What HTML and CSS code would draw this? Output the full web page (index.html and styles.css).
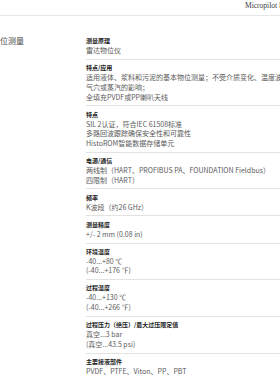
FILE: index.html
```html
<!DOCTYPE html>
<html lang="zh-CN">
<head>
<meta charset="utf-8">
<title>Micropilot FMR50</title>
<link rel="stylesheet" href="styles.css">
</head>
<body>
<div class="page">
  <header class="topbar">
    <span class="crumb">Micropilot FMR50</span>
  </header>
  <main class="main">
    <aside class="side">
      <h2 class="heading">物位测量</h2>
    </aside>
    <section class="list">
      <div class="spec">
        <div class="label">测量原理</div>
        <div class="v">雷达物位仪</div>
      </div>
      <div class="spec">
        <div class="label">特点/应用</div>
        <div class="v">适用液体、浆料和污泥的基本物位测量；不受介质变化、温度波动、<br>气穴或蒸汽的影响；</div>
        <div class="v">全填充PVDF或PP喇叭天线</div>
      </div>
      <div class="spec">
        <div class="label">特点</div>
        <div class="v">SIL 2认证，符合IEC 61508标准</div>
        <div class="v">多路回波跟踪确保安全性和可靠性</div>
        <div class="v">HistoROM智能数据存储单元</div>
      </div>
      <div class="spec">
        <div class="label">电源/通信</div>
        <div class="v">两线制（HART、PROFIBUS PA、FOUNDATION Fieldbus）</div>
        <div class="v">四限制（HART）</div>
      </div>
      <div class="spec">
        <div class="label">频率</div>
        <div class="v">K波段（约26 GHz）</div>
      </div>
      <div class="spec">
        <div class="label">测量精度</div>
        <div class="v">+/- 2 mm (0.08 in)</div>
      </div>
      <div class="spec">
        <div class="label">环境温度</div>
        <div class="v">-40...+80 ℃</div>
        <div class="v">(-40...+176 ℉)</div>
      </div>
      <div class="spec">
        <div class="label">过程温度</div>
        <div class="v">-40...+130 ℃</div>
        <div class="v">(-40...+266 ℉)</div>
      </div>
      <div class="spec">
        <div class="label">过程压力（绝压）/最大过压限定值</div>
        <div class="v">真空...3 bar</div>
        <div class="v">(真空...43.5 psi)</div>
      </div>
      <div class="spec">
        <div class="label">主要接液部件</div>
        <div class="v">PVDF、PTFE、Viton、PP、PBT</div>
      </div>
    </section>
  </main>
</div>
</body>
</html>
```
FILE: styles.css
```css
html, body {
  margin: 0;
  padding: 0;
  background: #ffffff;
}
body {
  width: 280px;
  height: 380px;
  overflow: hidden;
  font-family: "Noto Sans CJK SC", "Noto Sans", sans-serif;
  color: #555555;
}
.page {
  width: 440px;
}
.topbar {
  box-sizing: border-box;
  height: 16px;
  border-bottom: 1px solid #e6e6e6;
  padding-left: 245px;
}
.crumb {
  display: block;
  font-family: "Liberation Serif", serif;
  font-size: 7.5px;
  line-height: 12px;
  color: #3a3a3a;
  white-space: nowrap;
}
.main {
  display: flex;
  padding-top: 17px;
}
.side {
  width: 86px;
  flex: none;
}
.heading {
  margin: 2px 0 0 -8px;
  font-size: 8px;
  line-height: 12px;
  font-weight: 400;
  color: #444444;
  white-space: nowrap;
}
.list {
  flex: 1;
}
.spec {
  padding: 3.25px 0;
  border-top: 1px solid #e2e2e2;
}
.spec:first-child {
  border-top: 0;
}
.label {
  font-size: 6px;
  line-height: 10px;
  font-weight: 700;
  color: #222222;
  white-space: nowrap;
}
.v {
  font-size: 7px;
  line-height: 9.6px;
  color: #5a5a5a;
  white-space: nowrap;
}
```
